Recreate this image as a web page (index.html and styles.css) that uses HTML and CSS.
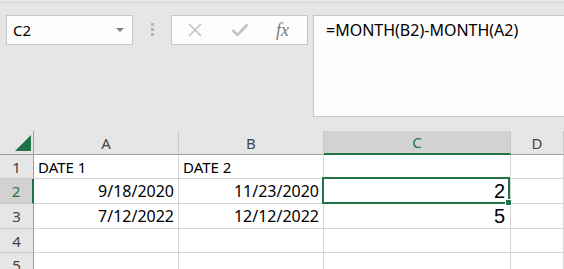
FILE: index.html
```html
<!DOCTYPE html>
<html lang="en">
<head>
  <meta charset="UTF-8" />
  <title>Excel - MONTH</title>
  <link rel="stylesheet" href="styles.css">
</head>
<body>

  <!-- Barra de fórmulas -->
  <div class="toolbar">
    <div class="namebox">
      <span>C2</span>
      <span class="arrow"></span>
    </div>
    <div class="dots"><i></i><i></i><i></i></div>
    <div class="fnbox">
      <svg class="ico" width="16" height="16" viewBox="0 0 16 16">
        <path d="M2 2 L14 14 M14 2 L2 14" stroke="#c3c3c3" stroke-width="1.6" fill="none" />
      </svg>
      <svg class="ico" width="18" height="14" viewBox="0 0 18 14">
        <path d="M1.5 7 L6.5 12 L16.5 1.5" stroke="#c3c3c3" stroke-width="2.6" fill="none" />
      </svg>
      <span class="fx">fx</span>
    </div>
    <div class="formula">=MONTH(B2)-MONTH(A2)</div>
  </div>

  <!-- Hoja -->
  <div class="sheet">
    <div class="hd corner">
      <svg width="16" height="16" viewBox="0 0 16 16"><polygon points="16,0 16,16 0,16" fill="#217346" /></svg>
    </div>
    <div class="hd col">A</div>
    <div class="hd col">B</div>
    <div class="hd col sel">C</div>
    <div class="hd col">D</div>

    <div class="hd row">1</div>
    <div class="cell">DATE 1</div>
    <div class="cell">DATE 2</div>
    <div class="cell"></div>
    <div class="cell"></div>

    <div class="hd row sel">2</div>
    <div class="cell num">9/18/2020</div>
    <div class="cell num">11/23/2020</div>
    <div class="cell num big active">2</div>
    <div class="cell"></div>

    <div class="hd row">3</div>
    <div class="cell num">7/12/2022</div>
    <div class="cell num">12/12/2022</div>
    <div class="cell num big">5</div>
    <div class="cell"></div>

    <div class="hd row">4</div>
    <div class="cell"></div>
    <div class="cell"></div>
    <div class="cell"></div>
    <div class="cell"></div>

    <div class="hd row">5</div>
    <div class="cell"></div>
    <div class="cell"></div>
    <div class="cell"></div>
    <div class="cell"></div>
  </div>

</body>
</html>
```

FILE: styles.css
```css
body {
  margin: 0;
  background-color: #e6e6e6;
  font-family: 'Noto Sans', 'Open Sans', sans-serif;
  color: #000;
  overflow: hidden;
}

.toolbar {
  display: flex;
  align-items: flex-start;
  height: 129px;
  box-sizing: border-box;
  margin-top: 2px;
  padding: 12px 0 0 6px;
  border-top: 1px solid #d4d4d4;
}

.namebox {
  width: 127px;
  height: 30px;
  box-sizing: border-box;
  border: 1px solid #c6c6c6;
  background-color: #fdfdfd;
  display: flex;
  align-items: center;
  justify-content: space-between;
  padding: 0 8px 0 6px;
  font-size: 15px;
}

.arrow {
  width: 0;
  height: 0;
  border-left: 4px solid transparent;
  border-right: 4px solid transparent;
  border-top: 4px solid #808080;
}

.dots {
  display: flex;
  flex-direction: column;
  gap: 2px;
  margin: 8px 17px 0 18px;
}

.dots i {
  display: block;
  width: 3px;
  height: 3px;
  background-color: #b4b4b4;
}

.fnbox {
  width: 137px;
  height: 30px;
  box-sizing: border-box;
  border: 1px solid #c6c6c6;
  background-color: #fdfdfd;
  display: flex;
  align-items: center;
  padding-left: 15px;
}

.fnbox .ico:nth-child(2) {
  margin-left: 28px;
}

.fx {
  margin-left: 27px;
  font-family: 'Liberation Serif', serif;
  font-style: italic;
  font-size: 18px;
  color: #7a7a7a;
}

.formula {
  flex: 1;
  height: 102px;
  box-sizing: border-box;
  margin-left: 5px;
  margin-right: -3px;
  border: 1px solid #c6c6c6;
  background-color: #fdfdfd;
  padding: 3px 12px;
  font-size: 16px;
}

.sheet {
  display: grid;
  grid-template-columns: 34px 145px 145px 187px 1fr;
  grid-template-rows: 24px 24px 25px 25px 24px 25px;
  background-color: #fff;
}

.sheet > div {
  box-sizing: border-box;
  border-right: 1px solid #d4d4d4;
  border-bottom: 1px solid #d4d4d4;
  font-size: 15px;
  display: flex;
  align-items: center;
  white-space: nowrap;
}

.hd {
  background-color: #e6e6e6;
  color: #444;
}

.hd.col {
  justify-content: center;
  border-right-color: #c8c8c8;
  border-bottom-color: #9e9e9e;
}

.hd.row {
  justify-content: center;
  border-right-color: #9e9e9e;
  border-bottom-color: #c8c8c8;
}

.corner {
  justify-content: flex-end;
  align-items: flex-end !important;
  padding: 0 2px 3px 0;
  border-right-color: #9e9e9e !important;
  border-bottom-color: #9e9e9e !important;
}

.hd.col.sel {
  background-color: #d2d2d2;
  color: #217346;
  border-bottom: 2px solid #217346;
}

.hd.row.sel {
  background-color: #d2d2d2;
  color: #217346;
  border-right: 2px solid #217346;
}

.cell {
  padding: 0 4px;
}

.sheet > .cell.num {
  justify-content: flex-end;
  font-size: 16px;
}

.sheet > .cell.big {
  font-family: 'Liberation Sans', sans-serif;
  font-size: 20px;
  padding-right: 5px;
}

.active {
  position: relative;
}

.active::after {
  content: '';
  position: absolute;
  top: -2px;
  left: -2px;
  right: 0;
  bottom: -1px;
  border: 2px solid #217346;
}

.active::before {
  content: '';
  position: absolute;
  right: -2px;
  bottom: -3px;
  width: 5px;
  height: 5px;
  background-color: #217346;
  border: 1px solid #fff;
  z-index: 1;
}
```
